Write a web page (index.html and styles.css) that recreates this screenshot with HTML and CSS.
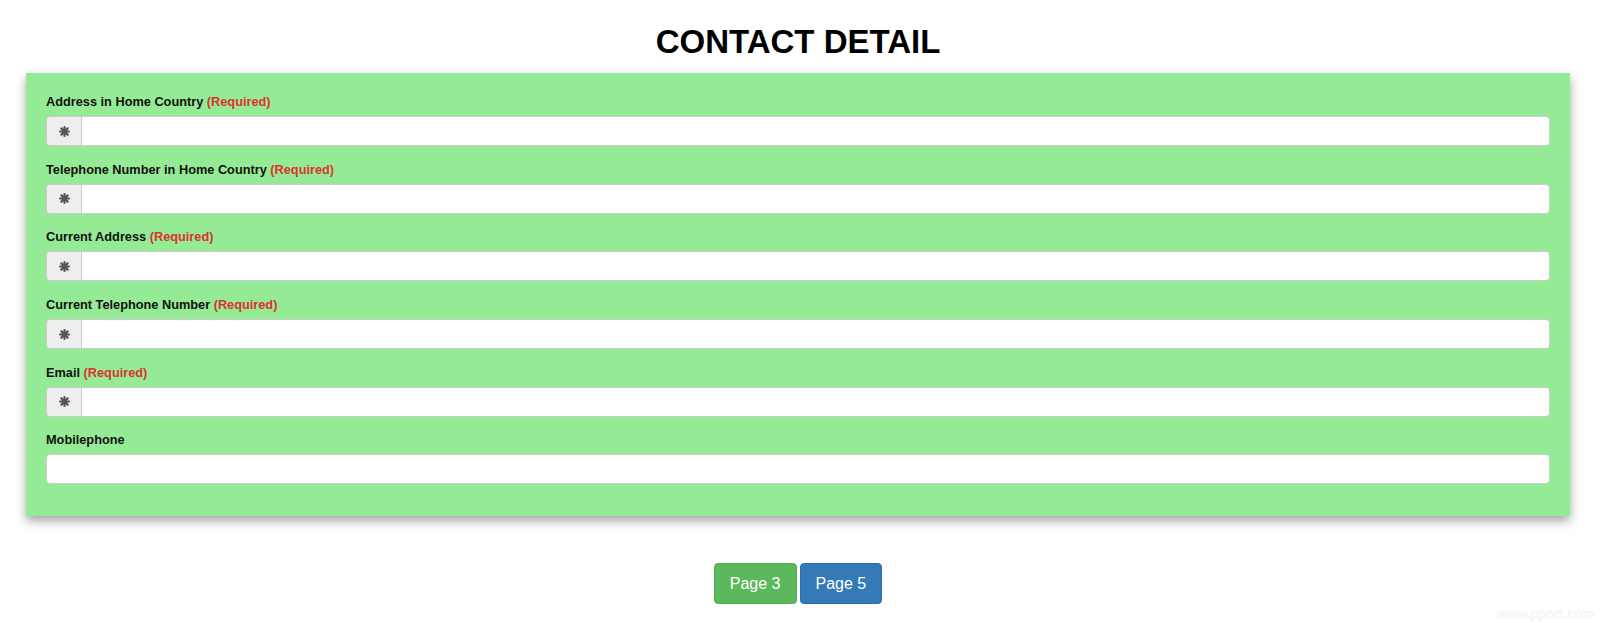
FILE: index.html
```html
<!DOCTYPE html>
<html>
<head>
<meta charset="utf-8">
<title>Contact Detail</title>
<link rel="stylesheet" href="styles.css">
</head>
<body>
<div class="page">
  <h1 class="title">CONTACT DETAIL</h1>
  <div class="panel">
    <div class="group">
      <label class="label">Address in Home Country <span class="req">(Required)</span></label>
      <div class="input-group">
        <span class="addon"><svg width="11" height="11" viewBox="0 0 12 12"><g stroke="#555" stroke-width="2.4" stroke-linecap="round"><line x1="6" y1="1.2" x2="6" y2="10.8"/><line x1="1.2" y1="6" x2="10.8" y2="6"/><line x1="2.6" y1="2.6" x2="9.4" y2="9.4"/><line x1="9.4" y1="2.6" x2="2.6" y2="9.4"/></g><circle cx="6" cy="6" r="2.6" fill="#555"/></svg></span>
        <span class="field"></span>
      </div>
    </div>
    <div class="group">
      <label class="label">Telephone Number in Home Country <span class="req">(Required)</span></label>
      <div class="input-group">
        <span class="addon"><svg width="11" height="11" viewBox="0 0 12 12"><g stroke="#555" stroke-width="2.4" stroke-linecap="round"><line x1="6" y1="1.2" x2="6" y2="10.8"/><line x1="1.2" y1="6" x2="10.8" y2="6"/><line x1="2.6" y1="2.6" x2="9.4" y2="9.4"/><line x1="9.4" y1="2.6" x2="2.6" y2="9.4"/></g><circle cx="6" cy="6" r="2.6" fill="#555"/></svg></span>
        <span class="field"></span>
      </div>
    </div>
    <div class="group">
      <label class="label">Current Address <span class="req">(Required)</span></label>
      <div class="input-group">
        <span class="addon"><svg width="11" height="11" viewBox="0 0 12 12"><g stroke="#555" stroke-width="2.4" stroke-linecap="round"><line x1="6" y1="1.2" x2="6" y2="10.8"/><line x1="1.2" y1="6" x2="10.8" y2="6"/><line x1="2.6" y1="2.6" x2="9.4" y2="9.4"/><line x1="9.4" y1="2.6" x2="2.6" y2="9.4"/></g><circle cx="6" cy="6" r="2.6" fill="#555"/></svg></span>
        <span class="field"></span>
      </div>
    </div>
    <div class="group">
      <label class="label">Current Telephone Number <span class="req">(Required)</span></label>
      <div class="input-group">
        <span class="addon"><svg width="11" height="11" viewBox="0 0 12 12"><g stroke="#555" stroke-width="2.4" stroke-linecap="round"><line x1="6" y1="1.2" x2="6" y2="10.8"/><line x1="1.2" y1="6" x2="10.8" y2="6"/><line x1="2.6" y1="2.6" x2="9.4" y2="9.4"/><line x1="9.4" y1="2.6" x2="2.6" y2="9.4"/></g><circle cx="6" cy="6" r="2.6" fill="#555"/></svg></span>
        <span class="field"></span>
      </div>
    </div>
    <div class="group">
      <label class="label">Email <span class="req">(Required)</span></label>
      <div class="input-group">
        <span class="addon"><svg width="11" height="11" viewBox="0 0 12 12"><g stroke="#555" stroke-width="2.4" stroke-linecap="round"><line x1="6" y1="1.2" x2="6" y2="10.8"/><line x1="1.2" y1="6" x2="10.8" y2="6"/><line x1="2.6" y1="2.6" x2="9.4" y2="9.4"/><line x1="9.4" y1="2.6" x2="2.6" y2="9.4"/></g><circle cx="6" cy="6" r="2.6" fill="#555"/></svg></span>
        <span class="field"></span>
      </div>
    </div>
    <div class="group">
      <label class="label">Mobilephone</label>
      <div class="input-group">
        <span class="field solo"></span>
      </div>
    </div>
  </div>
  <div class="buttons">
    <span class="btn btn-green">Page 3</span>
    <span class="btn btn-blue">Page 5</span>
  </div>
</div>
<div class="watermark">www.pport.com</div>
</body>
</html>
```
FILE: styles.css
```css
html, body {
  margin: 0;
  padding: 0;
  background: #fff;
  font-family: "Liberation Sans", Arial, Helvetica, sans-serif;
  color: #000;
}
.page {
  padding: 0 30px 0 26px;
}
.title {
  margin: 24px 0 13px;
  font-size: 33px;
  line-height: 36px;
  font-weight: bold;
  text-align: center;
}
.panel {
  background: #95eb95;
  padding: 20px 20px 17px 20px;
  box-shadow: 0 5px 10px rgba(0, 0, 0, 0.35);
}
.group {
  margin-bottom: 14.7px;
}
.label {
  display: block;
  font-size: 12.75px;
  line-height: 18px;
  font-weight: bold;
  margin-bottom: 5px;
  color: #111;
}
.req {
  color: #dc3232;
}
.input-group {
  display: flex;
  height: 30px;
}
.addon {
  box-sizing: border-box;
  width: 35px;
  flex: none;
  background: #eee;
  border: 1px solid #ccc;
  border-right: none;
  border-radius: 4px 0 0 4px;
  display: flex;
  align-items: center;
  justify-content: center;
}
.addon svg {
  display: block;
}
.field {
  flex: 1;
  box-sizing: border-box;
  background: #fff;
  border: 1px solid #ccc;
  border-radius: 0 4px 4px 0;
}
.field.solo {
  border-radius: 4px;
}
.buttons {
  display: flex;
  justify-content: center;
  gap: 3px;
  margin-top: 47px;
}
.btn {
  display: inline-block;
  font-size: 16px;
  line-height: 21px;
  padding: 9px 15px;
  border: 1px solid transparent;
  border-radius: 4px;
  color: #fff;
}
.btn-green {
  background: #5cb85c;
  border-color: #4cae4c;
}
.btn-blue {
  background: #337ab7;
  border-color: #2e6da4;
}
.watermark {
  position: absolute;
  right: 6px;
  top: 606px;
  font-size: 13px;
  font-weight: bold;
  color: #f5f5f5;
}
```
